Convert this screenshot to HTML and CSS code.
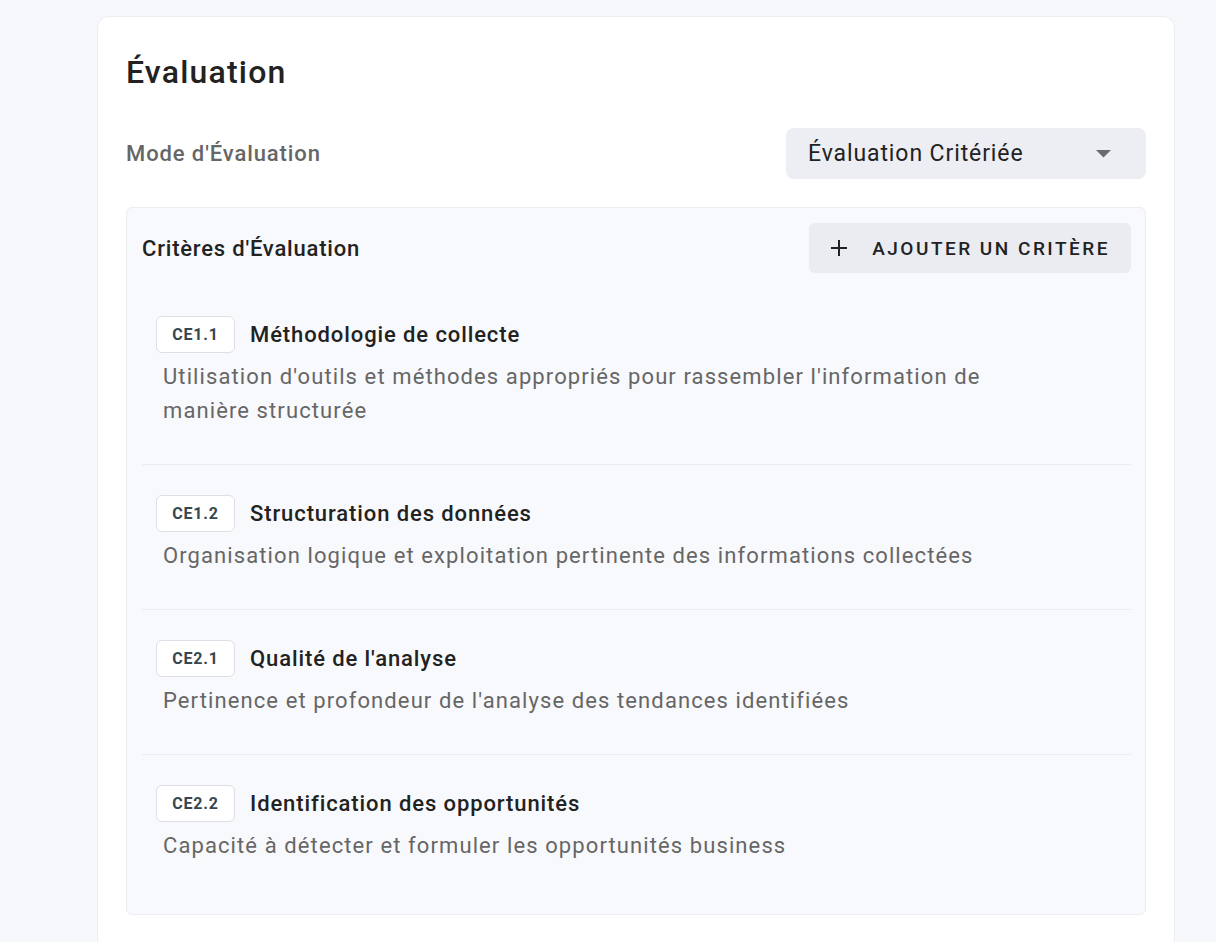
FILE: index.html
```html
<!DOCTYPE html>
<html lang="fr">
<head>
    <meta charset="UTF-8">
    <meta name="viewport" content="width=device-width, initial-scale=1.0">
    <title>Évaluation</title>
    <link rel="stylesheet" href="styles.css">
</head>
<body>
    <div class="page">
        <section class="card">
            <h2 class="card-title">Évaluation</h2>

            <div class="mode-row">
                <span class="mode-label">Mode d'Évaluation</span>
                <div class="select">
                    <span>Évaluation Critériée</span>
                    <svg class="caret" width="15" height="8" viewBox="0 0 15 8">
                        <polygon points="0,0 15,0 7.5,7.5" fill="#6b6b6b"/>
                    </svg>
                </div>
            </div>

            <div class="criteria">
                <div class="criteria-head">
                    <h3>Critères d'Évaluation</h3>
                    <button class="add-btn">
                        <svg width="16" height="16" viewBox="0 0 16 16">
                            <path d="M8 0v16M0 8h16" stroke="#222" stroke-width="2"/>
                        </svg>
                        Ajouter un critère
                    </button>
                </div>

                <ul class="criteria-list">
                    <li class="criterion">
                        <div class="criterion-top">
                            <span class="code">CE1.1</span>
                            <span class="criterion-name">Méthodologie de collecte</span>
                        </div>
                        <p class="criterion-desc">Utilisation d'outils et méthodes appropriés pour rassembler l'information de manière structurée</p>
                    </li>
                    <li class="criterion">
                        <div class="criterion-top">
                            <span class="code">CE1.2</span>
                            <span class="criterion-name">Structuration des données</span>
                        </div>
                        <p class="criterion-desc">Organisation logique et exploitation pertinente des informations collectées</p>
                    </li>
                    <li class="criterion">
                        <div class="criterion-top">
                            <span class="code">CE2.1</span>
                            <span class="criterion-name">Qualité de l'analyse</span>
                        </div>
                        <p class="criterion-desc">Pertinence et profondeur de l'analyse des tendances identifiées</p>
                    </li>
                    <li class="criterion">
                        <div class="criterion-top">
                            <span class="code">CE2.2</span>
                            <span class="criterion-name">Identification des opportunités</span>
                        </div>
                        <p class="criterion-desc">Capacité à détecter et formuler les opportunités business</p>
                    </li>
                </ul>
            </div>
        </section>
    </div>
</body>
</html>
```

FILE: styles.css
```css
/* General Styling */
body {
    font-family: Roboto, "Liberation Sans", sans-serif;
    margin: 0;
    padding: 0;
    background-color: #f7f8fc;
    color: #222;
}

.page {
    padding: 16px 41px 0 97px;
}

.card {
    background-color: #fff;
    border: 1px solid #eceef3;
    border-bottom: none;
    border-radius: 12px 12px 0 0;
    padding: 28px 28px 40px;
}

.card-title {
    margin: 8px 0 37px;
    font-size: 32px;
    font-weight: 500;
    line-height: 38px;
    letter-spacing: 1.2px;
    color: #222;
}

/* Mode selector */
.mode-row {
    display: flex;
    align-items: center;
    justify-content: space-between;
}

.mode-label {
    font-size: 22px;
    font-weight: 500;
    letter-spacing: 0.9px;
    color: #666;
}

.select {
    width: 360px;
    height: 51px;
    box-sizing: border-box;
    padding: 0 35px 0 22px;
    display: flex;
    align-items: center;
    justify-content: space-between;
    background-color: #eceef4;
    border-radius: 8px;
    font-size: 23px;
    letter-spacing: 0.9px;
    color: #222;
}

/* Criteria box */
.criteria {
    margin-top: 28px;
    background-color: #f8f9fc;
    border: 1px solid #eceef2;
    border-radius: 6px;
    padding: 15px 14px 15px 15px;
}

.criteria-head {
    display: flex;
    align-items: center;
    justify-content: space-between;
    margin-bottom: 13px;
}

.criteria-head h3 {
    margin: 0;
    font-size: 22px;
    font-weight: 500;
    letter-spacing: 0.8px;
    color: #222;
}

.add-btn {
    display: flex;
    align-items: center;
    gap: 25px;
    height: 50px;
    padding: 0 21px 0 22px;
    border: none;
    border-radius: 6px;
    background-color: #eaecf2;
    font-family: inherit;
    font-size: 19px;
    font-weight: 500;
    letter-spacing: 2.5px;
    text-transform: uppercase;
    color: #222;
    cursor: pointer;
}

.criteria-list {
    list-style: none;
    margin: 0;
    padding: 0;
}

.criterion {
    padding: 30px 14px 36px;
    border-bottom: 1px solid #eaecf0;
}

.criterion:last-child {
    border-bottom: none;
}

.criterion-top {
    display: flex;
    align-items: center;
    gap: 15px;
    margin-bottom: 7px;
}

.code {
    display: inline-flex;
    align-items: center;
    justify-content: center;
    width: 79px;
    height: 37px;
    box-sizing: border-box;
    background-color: #fff;
    border: 1px solid #dcdfe5;
    border-radius: 6px;
    font-size: 16px;
    font-weight: 700;
    letter-spacing: 0.8px;
    color: #37474f;
}

.criterion-name {
    font-size: 22px;
    font-weight: 500;
    letter-spacing: 0.9px;
    color: #222;
}

.criterion-desc {
    margin: 0 0 0 7px;
    max-width: 830px;
    font-size: 22px;
    line-height: 34px;
    letter-spacing: 1.1px;
    color: #666;
}
```
